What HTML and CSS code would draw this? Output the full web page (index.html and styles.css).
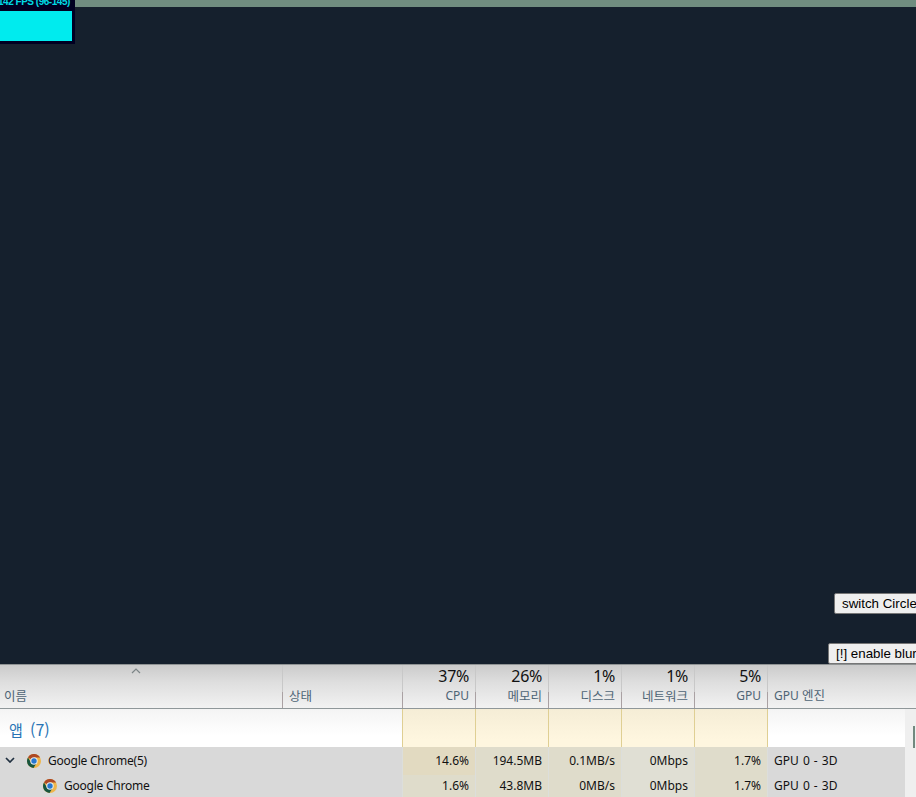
FILE: index.html
```html
<!DOCTYPE html>
<html lang="ko">
<head>
<meta charset="utf-8">
<title>Performance</title>
<link rel="stylesheet" href="styles.css">
</head>
<body>
<svg class="defs" aria-hidden="true">
  <symbol id="chrome" viewBox="0 0 14 14">
    <circle cx="7" cy="7" r="7" fill="#efb64b"/>
    <path d="M7 7 1 3.4A7 7 0 0 1 13.1 3.5H7Z" fill="#ad4925"/>
    <path d="M1 3.4A7 7 0 0 0 6.5 14L9.8 8.8 4 8.5Z" fill="#17553f"/>
    <circle cx="7" cy="7" r="3.7" fill="#e9eef0"/>
    <circle cx="7" cy="7" r="2.7" fill="#2878d0"/>
  </symbol>
</svg>
<main class="stage">
  <div class="topbar"></div>
  <div class="stats"><div class="fps">142 FPS (96-145)</div><div class="graph"></div></div>
  <button class="btn switch">switch Circle</button>
  <button class="btn blur">[!] enable blur</button>
</main>
<section class="manager">
  <div class="row head">
    <div class="cell name"><svg class="sort" viewBox="0 0 10 6"><path d="M1 5 5 1 9 5"/></svg><span class="ko">이름</span></div>
    <div class="cell"><span class="ko">상태</span></div>
    <div class="cell num"><b>37%</b><span>CPU</span></div>
    <div class="cell num"><b>26%</b><span class="ko">메모리</span></div>
    <div class="cell num"><b>1%</b><span class="ko">디스크</span></div>
    <div class="cell num"><b>1%</b><span class="ko">네트워크</span></div>
    <div class="cell num"><b>5%</b><span>GPU</span></div>
    <div class="cell last"><span>GPU <i class="ko">엔진</i></span></div>
  </div>
  <div class="body">
    <div class="rows">
      <div class="row group">
        <div class="title">앱 <span>(7)</span></div>
        <div class="heat"></div><div class="heat"></div><div class="heat"></div><div class="heat"></div><div class="heat"></div><div></div>
      </div>
      <div class="row item">
        <div class="app"><svg class="chevron" viewBox="0 0 10 6"><path d="M1 1 5 5 9 1"/></svg><svg class="logo"><use href="#chrome"/></svg><span>Google Chrome(5)</span></div>
        <div class="val hot">14.6%</div><div class="val">194.5MB</div><div class="val">0.1MB/s</div><div class="val cool">0Mbps</div><div class="val">1.7%</div><div class="engine">GPU 0 - 3D</div>
      </div>
      <div class="row item child">
        <div class="app"><svg class="logo"><use href="#chrome"/></svg><span>Google Chrome</span></div>
        <div class="val">1.6%</div><div class="val">43.8MB</div><div class="val">0MB/s</div><div class="val cool">0Mbps</div><div class="val">1.7%</div><div class="engine">GPU 0 - 3D</div>
      </div>
    </div>
    <div class="scroll"><div class="thumb"></div></div>
  </div>
</section>
</body>
</html>
```
FILE: styles.css
```css
* { box-sizing: border-box; }
body { margin: 0; width: 916px; height: 797px; overflow: hidden; font: 12px/16px "Noto Sans", "Noto Sans CJK KR", sans-serif; color: #111; }
.defs { position: absolute; width: 0; height: 0; }
.stage { position: relative; height: 664px; background: #15202d; overflow: hidden; }
.topbar { height: 7px; background: #708d80; }
.stats { position: absolute; left: 0; top: 0; width: 75px; height: 44px; background: #000022; overflow: hidden; }
.fps { height: 11px; margin-left: -2px; font: bold 10px/10px "Liberation Sans", sans-serif; letter-spacing: -.48px; margin-top: -3px; color: #00d9e4; white-space: nowrap; }
.graph { width: 72px; height: 30px; margin-top: 3px; background: #00ebee; }
.btn { position: absolute; height: 21px; padding: 0 7px; border: 1px solid #767676; border-radius: 2px; background: #efefef; font: 13.333px/17px "Liberation Sans", sans-serif; color: #000; text-align: left; white-space: nowrap; }
.switch { left: 834px; top: 593px; width: 100px; }
.blur { left: 828px; top: 643px; width: 106px; }
.manager { height: 133px; background: #fff; }
.row { display: grid; grid-template-columns: 403px repeat(5, 73px) 1fr; }
.head { grid-template-columns: 283px 120px repeat(5, 73px) 1fr; height: 45px; border-top: 1px solid #8f9394; border-bottom: 1px solid #8f9799; background: linear-gradient(#cbcbcb, #dedede 40%, #f2f2f2); color: #4e6475; }
.cell { position: relative; display: flex; flex-direction: column; justify-content: flex-end; padding: 0 6px 5px; border-right: 1px solid; border-image: linear-gradient(#c8c8c8 0 62%, #aaa1a3 62%) 1; }
.cell.last { border: 0; }
.cell.name { padding-left: 4px; }
.cell > span { line-height: 15px; }
.ko { font: 400 12.5px/15px "Noto Sans CJK KR", sans-serif; }
.num { text-align: right; }
.num b { font-size: 16px; line-height: 20px; margin-bottom: 2px; font-weight: 400; letter-spacing: -.3px; color: #111; }
.sort { position: absolute; left: 131px; top: 3px; width: 10px; height: 6px; fill: none; stroke: #7c8587; stroke-width: 1.2; }
.body { display: flex; }
.rows { width: 905px; }
.group { height: 38px; background: linear-gradient(#f4f4f4, #fff 70%); }
.title { padding: 9px 0 0 9px; border-right: 1px solid #dfcf93; font: 400 15px/22px "Noto Sans CJK KR", sans-serif; color: #2874b5; }
.title span { margin-left: 3px; font-size: 16px; }
.heat { border-right: 1px solid #dfcf93; background: linear-gradient(#f5edd6, #fef6df 80%); }
.item { height: 28px; background: #d9d9d9; }
.child { height: 22px; }
.app { display: flex; align-items: center; padding-left: 5px; border-right: 1px solid #dcdedb; letter-spacing: -.23px; }
.child .app { padding-left: 43px; }
.chevron { width: 10px; height: 6px; margin: 0 12px 2px 0; fill: none; stroke: #203040; stroke-width: 1.7; }
.logo { width: 14px; height: 14px; margin-right: 7px; }
.val { padding: 6px 6px 0 0; border-right: 1px solid #dcdedb; background: #dfdccb; text-align: right; }
.child .val, .child .engine { padding-top: 3px; }
.val.hot { background: #e2dac1; }
.val.cool { background: #e0dfd4; }
.engine { padding: 6px 0 0 6px; word-spacing: 1px; }
.scroll { width: 11px; height: 88px; padding: 17px 1px 0 8px; background: #efefef; }
.thumb { height: 22px; width: 2px; background: #71897f; }
```
